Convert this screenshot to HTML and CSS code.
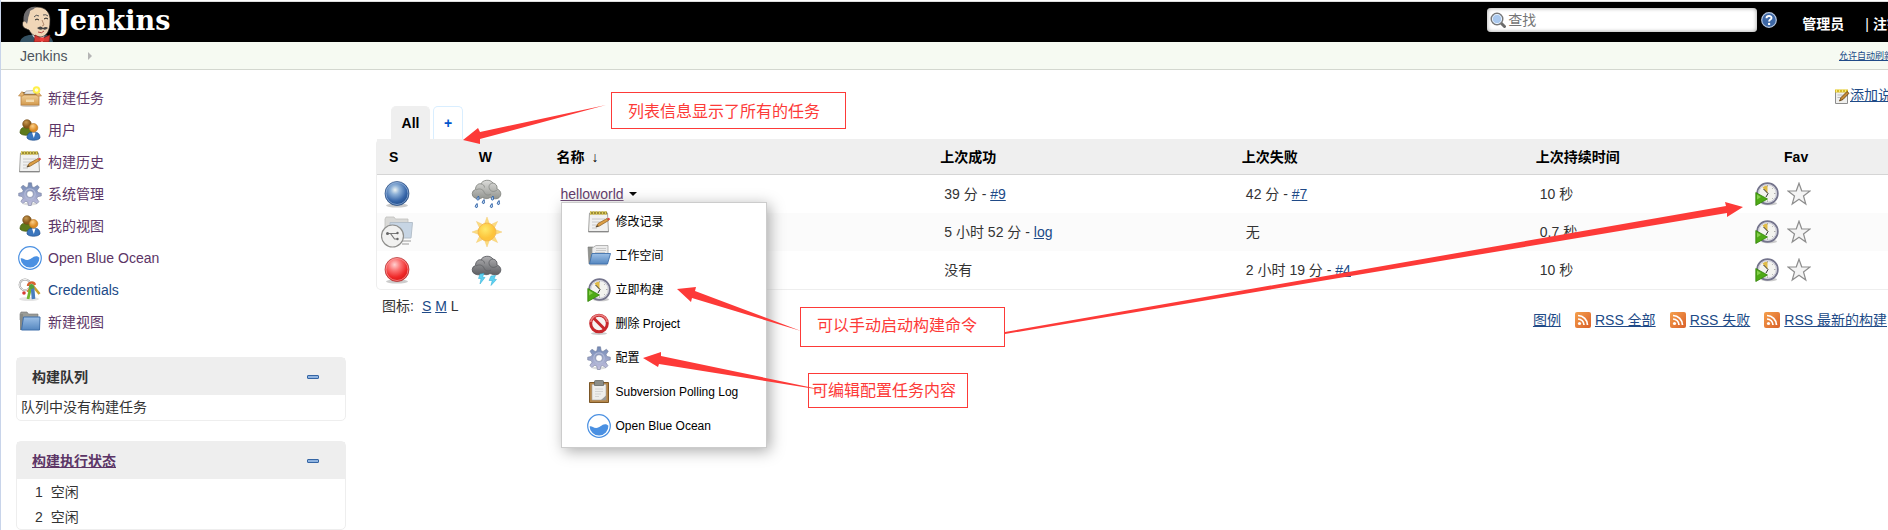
FILE: index.html
```html
<!DOCTYPE html>
<html lang="zh-CN">
<head>
<meta charset="utf-8">
<title>Jenkins</title>
<link rel="stylesheet" href="styles.css">
</head>
<body>
<svg class="defs" aria-hidden="true">
  <defs>
    <radialGradient id="gBlue" cx=".42" cy=".35" r=".62"><stop offset="0" stop-color="#eef4f2"/><stop offset=".3" stop-color="#8fb2d8"/><stop offset=".75" stop-color="#3867aa"/><stop offset="1" stop-color="#23508f"/></radialGradient>
    <radialGradient id="gRed" cx=".4" cy=".3" r=".65"><stop offset="0" stop-color="#ffd0d0"/><stop offset=".4" stop-color="#fb7070"/><stop offset=".8" stop-color="#ef2929"/><stop offset="1" stop-color="#e01c1c"/></radialGradient>
    <linearGradient id="gFolder" x2="0" y2="1"><stop offset="0" stop-color="#9dc0e6"/><stop offset="1" stop-color="#5587c0"/></linearGradient>
    <linearGradient id="gGear" x2="0" y2="1"><stop offset="0" stop-color="#7088b4"/><stop offset="1" stop-color="#c3c0de"/></linearGradient>
    <linearGradient id="gBox" x2="0" y2="1"><stop offset="0" stop-color="#f0cf98"/><stop offset="1" stop-color="#d39a4e"/></linearGradient>
    <linearGradient id="gCloud" x2="0" y2="1"><stop offset="0" stop-color="#dcdcda"/><stop offset="1" stop-color="#92948f"/></linearGradient>
    <linearGradient id="gStorm" x2="0" y2="1"><stop offset="0" stop-color="#b0b0b2"/><stop offset="1" stop-color="#5e5f63"/></linearGradient>
    <linearGradient id="gRss" x2="1" y2="1"><stop offset="0" stop-color="#f5a04c"/><stop offset="1" stop-color="#d9602a"/></linearGradient>
    <radialGradient id="gSun" cx=".4" cy=".35"><stop offset="0" stop-color="#ffe96a"/><stop offset="1" stop-color="#fdc43b"/></radialGradient>
    <radialGradient id="gHead" cx=".4" cy=".3"><stop offset="0" stop-color="#fbd08a"/><stop offset="1" stop-color="#dd8c26"/></radialGradient>
    <radialGradient id="gHead2" cx=".4" cy=".3"><stop offset="0" stop-color="#c99a50"/><stop offset="1" stop-color="#8a5a1c"/></radialGradient>
  </defs>
  <symbol id="i-package" viewBox="0 0 24 24">
    <ellipse cx="12" cy="19.500" rx="10" ry="1.600" fill="#ccc"/>
    <path d="M4 6h16l-1 4H5z" fill="#8d6a3a"/><path d="M6 8l2-3 7-.5 2 3.500z" fill="#e9e9e9" stroke="#888" stroke-width=".5"/>
    <path d="M3 9h18v10H3z" fill="url(#gBox)" stroke="#b98240" stroke-width=".8"/>
    <path d="M4 5.500L.5 10H5l1-2zM20 5.500l3.500 4.500H19l-1-2z" fill="#e5b673" stroke="#b98240" stroke-width=".6"/>
    <path d="M8 13.500h8v2.500H8z" fill="#f4dcb0"/>
    <circle cx="18.500" cy="4" r="3.800" fill="#fff04a"/><circle cx="18.500" cy="4" r="1.800" fill="#fffde0"/>
  </symbol>
  <symbol id="i-users" viewBox="0 0 24 24">
    <path d="M2 15c0-4 2-6 6-6s6 2 6 6c-2 3-10 3-12 0z" fill="#5d7a1b" stroke="#43590f" stroke-width=".7"/>
    <circle cx="9" cy="6" r="4.300" fill="url(#gHead2)" stroke="#704712" stroke-width=".6"/>
    <path d="M9 20c0-4 2-6 6.500-6s6.500 2 6.500 6c-2 3-11 3-13 0z" fill="#3b76bd" stroke="#1f4d8b" stroke-width=".7"/>
    <path d="M14 14.500h3.500L15.800 20z" fill="#fff"/>
    <circle cx="15.500" cy="9.800" r="4.300" fill="url(#gHead)" stroke="#b6701c" stroke-width=".6"/>
  </symbol>
  <symbol id="i-notepad" viewBox="0 0 24 24">
    <path d="M2.500 3h18l1 19H1.500z" fill="#f1f1f0" stroke="#a5a5a3"/>
    <path d="M1.500 21.500h20" stroke="#888"/>
    <path d="M3 1.500h17v3H3z" fill="#a08f30"/><path d="M3.500 1v4M6.500 1v4M9.500 1v4M12.500 1v4M15.500 1v4M18.500 1v4" stroke="#d8c860"/>
    <path d="M5 9h13M5 12h9M5 15h6M5 18h5" stroke="#c4c4c4" stroke-width=".9"/>
    <path d="M9 17l2-3.500 9-5 1.500 2-9 5.500z" fill="#dd9f45" stroke="#8a5a1c" stroke-width=".7"/>
    <path d="M20 8.500l2-.8 1.200 1.600-1.700 1.200z" fill="#d9443c"/><path d="M8.500 17.300l2.300-2 .8.9z" fill="#333"/>
  </symbol>
  <symbol id="i-gear" viewBox="0 0 24 24">
    <ellipse cx="12" cy="22" rx="7" ry="1.500" fill="#ddd"/>
    <path fill-rule="evenodd" fill="url(#gGear)" stroke="#76809e" stroke-width=".6" d="M10.500.8h3l.7 4 1.800.7 3.400-2.300 1.900 2-2.200 3.300.7 1.900 3.500.8v2.700l-3.700.8-.8 1.800 2.100 3.200-2 2-3.300-2.100-1.700.7-.7 3.200h-2.800l-.7-3.500-1.800-.8-3 2.300-2.100-2 2.200-3.200-.8-1.700-3.500-.7v-2.700l3.700-.8.8-1.900L3 5.200l2-2 3.200 2.300 1.700-.7zM12 8.700a3.400 3.400 0 100 6.800 3.400 3.400 0 000-6.800z"/>
    <circle cx="12" cy="12.100" r="5.200" fill="none" stroke="#b2bad6" stroke-width="1.200"/>
  </symbol>
  <symbol id="i-ocean" viewBox="0 0 24 24">
    <circle cx="12" cy="12" r="11.300" fill="#fff" stroke="#4a90e2" stroke-width="1.200"/>
    <path d="M2.600 12.500c2-.8 3.500 1.500 6.500 1.500 4 0 5.500-3.700 9-3.700 1.600 0 2.500.6 3.300 1.500a9.400 9.400 0 01-18.800.7z" fill="#4a90e2"/>
  </symbol>
  <symbol id="i-keys" viewBox="0 0 24 24">
    <ellipse cx="11" cy="21" rx="10" ry="2" fill="#e4e4e4"/>
    <circle cx="7" cy="6.800" r="5.400" fill="none" stroke="#999" stroke-width="2"/><circle cx="7" cy="6.800" r="5.400" fill="none" stroke="#f2f2f2" stroke-width="1"/>
    <path d="M15 8l6.500 8" stroke="#c9a02c" stroke-width="2.600"/><path d="M12 10l-2.500 4" stroke="#d8833b" stroke-width="2"/><circle cx="6" cy="15" r="1.800" fill="#d83b34"/>
    <path d="M12.500 10l-2.500 11" stroke="#73b62a" stroke-width="2.800"/><path d="M14.500 9l1 12" stroke="#4a7dbd" stroke-width="3.600"/>
    <path d="M10 8a3.600 3.600 0 017-1" fill="none" stroke="#d8622e" stroke-width="2.400"/><circle cx="13.500" cy="8.500" r="2.500" fill="#57a03d"/>
  </symbol>
  <symbol id="i-folder" viewBox="0 0 24 24">
    <path d="M2 4l1-2h6l1.500 2H20v6H2z" fill="#9a9c97" stroke="#777" stroke-width=".6"/><path d="M2 4h3v16H2z" fill="#888a85"/>
    <path d="M5.500 7H22l-.5 13H3.500z" fill="url(#gFolder)" stroke="#4070ab"/>
  </symbol>
  <symbol id="i-folderopen" viewBox="0 0 24 24">
    <path d="M1 3h5l1 2 13-1v16H2z" fill="#92948f" stroke="#777" stroke-width=".6"/>
    <path d="M5 4l4-2.500h12V13H5z" fill="#ececec" stroke="#999" stroke-width=".7"/><path d="M9 4.500h10M9 6.500h10M8 8.500h10" stroke="#bbb" stroke-width=".7"/>
    <path d="M5 9.500h18.500L20.500 20H2.500z" fill="url(#gFolder)" stroke="#4070ab" stroke-width=".9"/>
    <path d="M3 21.500h17" stroke="#ddd"/>
  </symbol>
  <symbol id="i-build" viewBox="0 0 24 24">
    <ellipse cx="14" cy="21.500" rx="8" ry="1.800" fill="#ccc"/>
    <circle cx="12.500" cy="11.500" r="10.300" fill="#f3f3ef" stroke="#74748c" stroke-width="1.800"/><circle cx="12.500" cy="11.500" r="8.800" fill="none" stroke="#c9c9d8"/>
    <path d="M12.500 11.500L7.500 5.500A8 8 0 0112.500 3.500z" fill="#e0bb47"/>
    <path d="M8.500 7l4.500 4.500-2 3.500" fill="none" stroke="#333" stroke-width="1"/>
    <path d="M12.500 3v1.500M20.500 11.500H19M12.500 19.800v-1.400M18.200 5.800l-1 1M18.200 17.200l-1-1" stroke="#999" stroke-width=".8"/>
    <path d="M.8 10.500v13L12.500 17z" fill="#4eaa16" stroke="#318208" stroke-width=".8"/><path d="M2 12.500v5l4-2.500z" fill="#86cf4d"/>
  </symbol>
  <symbol id="i-delete" viewBox="0 0 24 24">
    <ellipse cx="12" cy="21.500" rx="8" ry="1.500" fill="#ccc"/>
    <circle cx="12" cy="11.500" r="8.300" fill="#f6f3f3" stroke="#c8282d" stroke-width="3"/>
    <path d="M6.500 6l11 11" stroke="#c8282d" stroke-width="3"/>
    <path d="M3.800 10a8.300 8.300 0 0116.400 0" fill="none" stroke="#e88080" stroke-width="1.600"/>
  </symbol>
  <symbol id="i-clip" viewBox="0 0 24 24">
    <path d="M2.500 2.500h19v20h-19z" fill="#b5874a" stroke="#7b5626"/>
    <path d="M5 4.500h14V20H5z" fill="#eeeeec" stroke="#aaa" stroke-width=".6"/><path d="M14 20l5-4.500V20z" fill="#999"/>
    <path d="M8 9h8M8 11.500h8M8 14h6M8 16.500h4" stroke="#ccc" stroke-width=".8"/>
    <path d="M7.500 1.500q0-1 1-1h7q1 0 1 1v4h-9z" fill="#8b8d88" stroke="#5c5e5a" stroke-width=".7"/>
  </symbol>
  <symbol id="i-star" viewBox="0 0 24 24"><path d="M12 1.200l2.700 7.600 8.300.2-6.500 5 2.300 8-6.800-4.700L5.200 22l2.300-8L1 9l8.300-.2z" fill="#f4f4f4" stroke="#8d8d8d" stroke-width="1.200"/></symbol>
  <symbol id="i-blueball" viewBox="0 0 32 32"><ellipse cx="16" cy="27.500" rx="11" ry="2" fill="#ccc"/><circle cx="16" cy="15.500" r="12" fill="url(#gBlue)" stroke="#2c4f80" stroke-width=".7"/><circle cx="16" cy="15.500" r="11" fill="none" stroke="#9db9dc" stroke-width=".7"/></symbol>
  <symbol id="i-redball" viewBox="0 0 32 32"><ellipse cx="16" cy="27.500" rx="11" ry="2" fill="#ccc"/><circle cx="16" cy="15.500" r="12" fill="url(#gRed)" stroke="#a33" stroke-width=".7"/><circle cx="16" cy="15.500" r="11" fill="none" stroke="#f9a0a0" stroke-width=".7"/></symbol>
  <symbol id="i-multi" viewBox="0 0 32 32">
    <path d="M4 3l1-2h8l1.500 2H27v18H4z" fill="#d9d9d7" stroke="#c0c0be" stroke-width=".8"/><path d="M9 6.500h22.500L30 22H9z" fill="#c7d5e4" stroke="#b4bfca"/>
    <path d="M21 25h9M21 28h7" stroke="#999"/>
    <circle cx="11.500" cy="20" r="11" fill="#f1f1f0" stroke="#8f8f8d" stroke-width="1.200"/>
    <path d="M6.500 17.500h10M9.500 17.500l4 5.500h3" fill="none" stroke="#777" stroke-width="1.200"/><circle cx="6.500" cy="17.500" r="1.500" fill="#666"/><circle cx="16.500" cy="17" r="1.200" fill="#666"/><circle cx="16.500" cy="23" r="1.200" fill="#666"/>
  </symbol>
  <symbol id="i-rain" viewBox="0 0 32 32">
    <path d="M4 20a4.500 4.500 0 01.5-8.500C4.500 7 8 5 10 6c1-4 9-5.500 12-1 3 .5 4.500 3 4 6 5 1.500 5 8 .5 9.500-3 1-6-.5-7.500-1-3 2-6 1-7.500 0-2 1.500-5 1.800-7.500.5z" fill="url(#gCloud)" stroke="#7b7d79" stroke-width=".8"/>
    <path d="M10 6c2 0 3.500 1.500 3.500 3.500M5 12c3-2 7-1 8 2s4 4 7 2M22 5c-3 0-5 3-3.500 6s5 3 7.500 1" fill="none" stroke="#888a86" stroke-width=".8"/>
    <g fill="#b9d2f0" stroke="#3566a8" stroke-width="1"><path d="M7.500 18q-3 3.500-.8 4t.8-4zM13 21.500q-3 3.500-.8 4t.8-4zM6 25.500q-3 3.500-.8 4t.8-4zM22 18q-3 3.500-.8 4t.8-4zM28 22.500q-3 3.500-.8 4t.8-4zM21 25.500q-3 3.500-.8 4t.8-4z"/></g>
  </symbol>
  <symbol id="i-storm" viewBox="0 0 32 32">
    <path d="M4 20a4.500 4.500 0 01.5-8.500C4.500 7 8 5 10 6c1-4 9-5.500 12-1 3 .5 4.500 3 4 6 5 1.500 5 8 .5 9.500-3 1-6-.5-7.500-1-3 2-6 1-7.500 0-2 1.500-5 1.800-7.500.5z" fill="url(#gStorm)" stroke="#515257" stroke-width=".8"/>
    <path d="M10 6c2 0 3.500 1.500 3.500 3.500M5 12c3-2 7-1 8 2s4 4 7 2M22 5c-3 0-5 3-3.500 6s5 3 7.500 1" fill="none" stroke="#606165" stroke-width=".8"/>
    <path d="M9 20l4-.5-1.500 3.500 2.500.5-5 6.500 1-5.500H7.500zM20 22l4.500-.5-1.500 3.500 2.500.5-5.500 6 1.200-5h-3.200z" fill="#5fd3f3" stroke="#28a8d0" stroke-width=".5"/>
  </symbol>
  <symbol id="i-sun" viewBox="0 0 32 32">
    <path d="M16 1l2.200 6h-4.400zM16 31l2.200-6h-4.400zM1 16l6-2.200v4.400zM31 16l-6-2.200v4.400zM5.400 5.400l5.600 2.700-2.900 2.900zM26.600 5.400L21 8.100l2.900 2.900zM5.400 26.600L11 23.900 8.100 21zM26.600 26.600L21 23.900l2.900-2.900z" fill="#fbdc80" stroke="#f3c566" stroke-width=".4"/>
    <circle cx="16" cy="16" r="8.800" fill="url(#gSun)" stroke="#f6b84a"/>
  </symbol>
  <symbol id="i-rss" viewBox="0 0 16 16"><rect width="16" height="16" rx="2" fill="url(#gRss)"/><circle cx="4.500" cy="11.500" r="1.600" fill="#fff"/><path d="M3 7a6 6 0 016 6M3 3.500A9.500 9.500 0 0112.500 13" fill="none" stroke="#fff" stroke-width="1.700"/></symbol>
  <symbol id="i-search" viewBox="0 0 16 16"><path d="M10.500 10.500l4 4" stroke="#6b6b6b" stroke-width="3" stroke-linecap="round"/><circle cx="7" cy="7" r="5.700" fill="#a9c8ee" stroke="#777" stroke-width="1.600"/><circle cx="7" cy="7" r="4.600" fill="none" stroke="#e5effa"/></symbol>
  <symbol id="i-help" viewBox="0 0 16 16"><circle cx="8" cy="8" r="7.300" fill="#3d67a5" stroke="#b5c6e0" stroke-width="1.200"/><path d="M5.500 6.200C5.500 3.200 10.700 3.300 10.500 6c-.1 1.600-2.400 1.600-2.400 3.400" fill="none" stroke="#fff" stroke-width="1.900"/><circle cx="8.100" cy="11.900" r="1.200" fill="#fff"/></symbol>
  <symbol id="i-edit" viewBox="0 0 16 16"><path d="M1.500 3h12v12.500h-12z" fill="#f0f0ee" stroke="#8c8c8c"/><path d="M1 1.500h13v3H1z" fill="#d9bd2b"/><path d="M2.500 1v3M5.500 1v3M8.500 1v3M11.500 1v3" stroke="#f8ea7a"/><path d="M3.500 7h5M3.500 9.500h3" stroke="#bbb"/><path d="M5.500 13l1.500-3.500 6-6 2 1.800-6 6.200z" fill="#c58a35" stroke="#5b3a0e" stroke-width=".8"/></symbol>
  <symbol id="i-butler" viewBox="0 0 33 36">
    <path d="M0 36c1-4 4-6 9-7l14-1c5 1 9 3 10 8z" fill="#335061"/><path d="M11 27l6 9h6l2-9z" fill="#fff"/>
    <path d="M4 13C4 4 10 1 17 1c9 0 14 6 13 15 0 8-3 14-9 15-6 0-10-3-12-7-4-1-6-4-5-11z" fill="#f0d6b7" stroke="#222" stroke-width=".7"/>
    <path d="M4 16C2 8 7 0 16 .7c-1 2-4 3-6 4.300 0 3-2 5-2 9l-1 4c-2-3-2-2-3-2z" fill="#6d6b6d"/>
    <path d="M4.500 15c-3 0-3 7 2 8" fill="#f0d6b7" stroke="#222" stroke-width=".7"/>
    <path d="M14 11q2-3 5-1M23 9q3-1 5 1" fill="none" stroke="#555"/><path d="M15 14q2-2 4 0M24 13q2-2 4 0" fill="none" stroke="#222"/>
    <path d="M22 14l2 5-2 1" fill="none" stroke="#a0765a" stroke-width=".8"/>
    <path d="M17 22q4-3 6 0 3-2 5 0-3 3-5 1-3 2-6-1z" fill="#444"/><path d="M18 26q4 2 6-1" fill="none" stroke="#a33" stroke-width=".9"/>
    <path d="M15 29l6 3v4h-7zM30 29l-7 3v4h6z" fill="#d33833" stroke="#7a1512" stroke-width=".6"/><circle cx="22" cy="33.500" r="2.300" fill="#ef3d3a"/>
  </symbol>
</svg>

<div class="page">
  <header class="header">
    <a class="brand" href="#"><svg class="butler"><use href="#i-butler"/></svg><span>Jenkins</span></a>
    <form class="search">
      <label class="searchbox"><svg class="ic16"><use href="#i-search"/></svg><input type="text" placeholder="查找" aria-label="查找"></label>
      <a class="help" href="#" aria-label="帮助"><svg class="ic16"><use href="#i-help"/></svg></a>
    </form>
    <nav class="login"><a href="#">管理员</a><span class="logout"><span class="bar">|</span><a href="#">注销</a></span></nav>
  </header>
  <nav class="crumbs">
    <a href="#">Jenkins</a>
    <svg class="crumbarrow" viewBox="0 0 4 8"><path d="M0 0l4 4-4 4z" fill="#b5b5b5"/></svg>
    <a class="refresh" href="#">允许自动刷新</a>
  </nav>

  <div class="columns">
    <aside class="side">
      <ul class="tasks">
        <li><a href="#"><svg class="ic24"><use href="#i-package"/></svg>新建任务</a></li>
        <li><a href="#"><svg class="ic24"><use href="#i-users"/></svg>用户</a></li>
        <li><a href="#"><svg class="ic24"><use href="#i-notepad"/></svg>构建历史</a></li>
        <li><a href="#"><svg class="ic24"><use href="#i-gear"/></svg>系统管理</a></li>
        <li><a href="#"><svg class="ic24"><use href="#i-users"/></svg>我的视图</a></li>
        <li><a href="#"><svg class="ic24"><use href="#i-ocean"/></svg>Open Blue Ocean</a></li>
        <li><a class="fresh" href="#"><svg class="ic24"><use href="#i-keys"/></svg>Credentials</a></li>
        <li><a href="#"><svg class="ic24"><use href="#i-folder"/></svg>新建视图</a></li>
      </ul>
      <section class="pane">
        <div class="panehead"><span>构建队列</span><button type="button" class="collapse" aria-label="折叠构建队列"></button></div>
        <p class="empty">队列中没有构建任务</p>
      </section>
      <section class="pane">
        <div class="panehead"><a href="#">构建执行状态</a><button type="button" class="collapse" aria-label="折叠构建执行状态"></button></div>
        <ul class="executors"><li><span>1</span>空闲</li><li><span>2</span>空闲</li></ul>
      </section>
    </aside>

    <main class="main">
      <div class="describe"><a href="#"><svg class="ic16"><use href="#i-edit"/></svg>添加说明</a></div>
      <div class="tabs"><a class="tab on" href="#">All</a><a class="tab add" href="#">+</a></div>
      <table class="jobs">
        <colgroup><col class="c-s"><col class="c-w"><col class="c-name"><col class="c-ok"><col class="c-bad"><col class="c-time"><col></colgroup>
        <thead><tr><th>S</th><th>W</th><th>名称 <span class="sort">↓</span></th><th>上次成功</th><th>上次失败</th><th>上次持续时间</th><th class="favhead">Fav</th></tr></thead>
        <tbody>
          <tr>
            <td class="state"><svg class="ic32"><use href="#i-blueball"/></svg></td>
            <td class="state"><svg class="ic32"><use href="#i-rain"/></svg></td>
            <td>
              <div class="job">
                <a class="seen" href="#">helloworld</a><button type="button" class="caret" aria-label="菜单"></button>
                <ul class="menu">
                  <li><a href="#"><svg class="ic24"><use href="#i-notepad"/></svg>修改记录</a></li>
                  <li><a href="#"><svg class="ic24"><use href="#i-folderopen"/></svg>工作空间</a></li>
                  <li><a href="#"><svg class="ic24"><use href="#i-build"/></svg>立即构建</a></li>
                  <li><a href="#"><svg class="ic24"><use href="#i-delete"/></svg>删除 Project</a></li>
                  <li><a href="#"><svg class="ic24"><use href="#i-gear"/></svg>配置</a></li>
                  <li><a href="#"><svg class="ic24"><use href="#i-clip"/></svg>Subversion Polling Log</a></li>
                  <li><a href="#"><svg class="ic24"><use href="#i-ocean"/></svg>Open Blue Ocean</a></li>
                </ul>
              </div>
            </td>
            <td>39 分 - <a href="#">#9</a></td><td>42 分 - <a href="#">#7</a></td><td>10 秒</td>
            <td class="favcell"><div class="acts"><svg class="ic24"><use href="#i-build"/></svg><svg class="ic24"><use href="#i-star"/></svg></div></td>
          </tr>
          <tr>
            <td class="state"><svg class="ic32"><use href="#i-multi"/></svg></td>
            <td class="state"><svg class="ic32"><use href="#i-sun"/></svg></td>
            <td></td>
            <td>5 小时 52 分 - <a href="#">log</a></td><td>无</td><td>0.7 秒</td>
            <td class="favcell"><div class="acts"><svg class="ic24"><use href="#i-build"/></svg><svg class="ic24"><use href="#i-star"/></svg></div></td>
          </tr>
          <tr>
            <td class="state"><svg class="ic32"><use href="#i-redball"/></svg></td>
            <td class="state"><svg class="ic32"><use href="#i-storm"/></svg></td>
            <td></td>
            <td>没有</td><td>2 小时 19 分 - <a href="#">#4</a></td><td>10 秒</td>
            <td class="favcell"><div class="acts"><svg class="ic24"><use href="#i-build"/></svg><svg class="ic24"><use href="#i-star"/></svg></div></td>
          </tr>
        </tbody>
      </table>
      <div class="under">
        <div class="sizes"><span>图标:</span><span class="sizelinks"><a href="#">S</a> <a href="#">M</a> L</span></div>
        <div class="feeds">
          <a href="#">图例</a>
          <span class="feed"><svg class="ic16"><use href="#i-rss"/></svg><a href="#">RSS 全部</a></span>
          <span class="feed"><svg class="ic16"><use href="#i-rss"/></svg><a href="#">RSS 失败</a></span>
          <span class="feed"><svg class="ic16"><use href="#i-rss"/></svg><a href="#">RSS 最新的构建</a></span>
        </div>
      </div>
    </main>
  </div>

  <div class="notes">
    <svg class="arrows" aria-hidden="true">
      <path d="M463 140l15-12 2 4 126-27-126 34v5z"/>
      <path d="M677 289l19-2-1 4 106 40-109-33-1 4z"/>
      <path d="M643 358l18-6v4l167 35-169-27-1 3z"/>
      <path d="M1743 207l-18-5 1 4-721 126v2l722-121v4z"/>
    </svg>
    <p class="note note-list">列表信息显示了所有的任务</p>
    <p class="note note-build">可以手动启动构建命令</p>
    <p class="note note-config">可编辑配置任务内容</p>
  </div>
</div>
</body>
</html>
```
FILE: styles.css
```css
* { box-sizing: border-box; }
html { overflow: hidden; }
body {
  margin: 0;
  min-height: 100vh;
  border-left: 1px solid #c8d4ea;
  background: #fff;
  color: #333;
  font: 14px/20px "Liberation Sans", "Noto Sans CJK SC", sans-serif;
}
ul, p { margin: 0; padding: 0; list-style: none; }
a { color: #204a87; }
svg { display: block; flex: none; }
button { border: 0; padding: 0; background: none; }
.defs { position: absolute; width: 0; height: 0; }
.ic16 { width: 16px; height: 16px; }
.ic24 { width: 24px; height: 24px; }
.ic32 { width: 32px; height: 32px; }

/* The page runs past the right edge of the window. */
.page { position: relative; margin-right: -33px; border-top: 1px solid #fff; }

.header {
  display: flex;
  height: 41px;
  padding: 0 20px 0 19px;
  border-top: 1px solid #ddd;
  background: #000;
}
.brand { display: flex; align-items: flex-end; gap: 4px; color: #fff; text-decoration: none; font: bold 27px/32px "DejaVu Serif", serif; }
.brand span { align-self: flex-start; padding-top: 3px; }
.butler { width: 33px; height: 36px; }
.search { display: flex; align-items: center; gap: 4px; height: 24px; margin: 6px 0 0 auto; }
.searchbox {
  display: flex;
  align-items: center;
  gap: 2px;
  width: 270px;
  height: 24px;
  padding-left: 3px;
  border-radius: 4px;
  background: #fff;
  box-shadow: inset 0 0 4px #999;
}
.searchbox input { flex: 1; min-width: 0; border: 0; padding: 0; outline: 0; background: none; font: inherit; }
.searchbox input::placeholder { color: #757575; }
.login { display: flex; gap: 21px; padding: 12px 0 0 25px; font-weight: bold; white-space: nowrap; }
.logout { display: flex; gap: 4px; }
.bar { font-weight: normal; color: #fff; }
.login a { color: #fff; text-decoration: none; }

.crumbs {
  display: flex;
  align-items: center;
  gap: 21px;
  height: 28px;
  padding: 0 28px 0 19px;
  border-bottom: 1px solid #d3d7cf;
  background: #f6faf2;
}
.crumbs a { color: #4d545d; text-decoration: none; }
.crumbarrow { width: 4px; height: 8px; }
.crumbs .refresh { margin-left: auto; color: #204a87; font-size: 9px; text-decoration: underline; }

.columns { display: flex; gap: 30px; padding-left: 15px; }
.side { flex: none; width: 330px; padding-top: 12px; }
.tasks { padding: 0 0 19px 2px; }
.tasks a { display: flex; align-items: center; gap: 6px; height: 32px; color: #5c3566; text-decoration: none; }
.tasks .fresh { color: #204a87; }
.pane { margin-bottom: 20px; border: 1px solid #eee; border-radius: 5px; }
.panehead { display: flex; align-items: center; height: 37px; padding: 0 26px 0 15px; background: #eee; font-weight: bold; }
.panehead a { color: #5c3566; }
.collapse { width: 12px; height: 4px; margin-left: auto; border: 1px solid #3465a4; border-radius: 1px; background: #8fb3e0; }
.empty { padding: 2px 4px 3px; }
.executors { padding: 0 18px; }
.executors li { display: flex; gap: 8px; height: 25px; align-items: center; }

.main { flex: 1; min-width: 0; padding-right: 20px; }
.describe { display: flex; justify-content: flex-end; margin-right: -5px; padding-top: 14px; }
.describe a { display: flex; align-items: center; height: 22px; }
.describe .ic16 { margin-top: 2px; }
.tabs { display: flex; gap: 3px; padding-left: 15px; font-weight: bold; }
.tab { display: flex; align-items: center; justify-content: center; height: 33px; border: 1px solid #d9eeff; border-bottom: 0; border-radius: 5px 5px 0 0; text-decoration: none; }
.on { width: 39px; border-color: #efefef; background: #efefef; color: #000; }
.add { width: 30px; color: #05c; }

.jobs { width: 100%; table-layout: fixed; border: 1px solid #eee; border-top: 0; border-radius: 5px; border-spacing: 0; }
.c-s { width: 5.9%; }
.c-w { width: 5.1%; }
.c-name { width: 25.2%; }
.c-ok { width: 19.8%; }
.c-bad { width: 19.3%; }
.c-time { width: 14.2%; }
.jobs th { height: 36px; padding: 0 0 0 12px; border-bottom: 1px solid #d5d5d5; background: #efefef; color: #000; text-align: left; }
.jobs .favhead { padding-left: 44px; }
.sort { padding-left: 3px; font-weight: normal; }
.jobs td { height: 38px; padding: 0 0 0 16px; white-space: nowrap; }
.jobs .state { padding-left: 4px; }
.jobs .favcell { padding-left: 15px; }
.jobs tbody tr:nth-child(2) { background: #fbfbfb; }
.acts { display: flex; gap: 8px; }

.job { position: relative; display: flex; align-items: center; gap: 5px; }
.seen { color: #5c3566; }
.caret { border: 4px solid transparent; border-top-color: #000; border-bottom: 0; }
.menu {
  position: absolute;
  z-index: 1;
  top: 18px;
  left: 0;
  min-width: 206px;
  padding: 2px 19px 4px 25px;
  border: 1px solid #ccc;
  background: #fff;
  box-shadow: 3px 3px 14px #aaa;
  font-size: 12px;
}
.menu a { display: flex; align-items: center; gap: 5px; height: 34px; color: #000; text-decoration: none; }

.under { display: flex; justify-content: space-between; align-items: flex-start; padding: 6px 14px 0 6px; }
.sizes { display: flex; gap: 8px; }
.feeds { display: flex; gap: 14px; padding-top: 14px; }
.feed { display: flex; align-items: center; gap: 4px; }

/* Callouts that float over the list */
.notes { position: absolute; z-index: 2; top: -1px; left: -1px; width: 100%; pointer-events: none; color: #fd3a38; }
.arrows { width: 100%; height: 420px; fill: currentColor; }
.note { position: absolute; display: flex; align-items: center; border: 1px solid currentColor; font-size: 16px; line-height: 20px; white-space: nowrap; }
.note-list { left: 611px; top: 92px; padding: 9px 25px 6px 16px; }
.note-build { left: 800px; top: 307px; padding: 8px 27px 10px 16px; }
.note-config { left: 808px; top: 373px; padding: 7px 11px 6px 3px; }
```
